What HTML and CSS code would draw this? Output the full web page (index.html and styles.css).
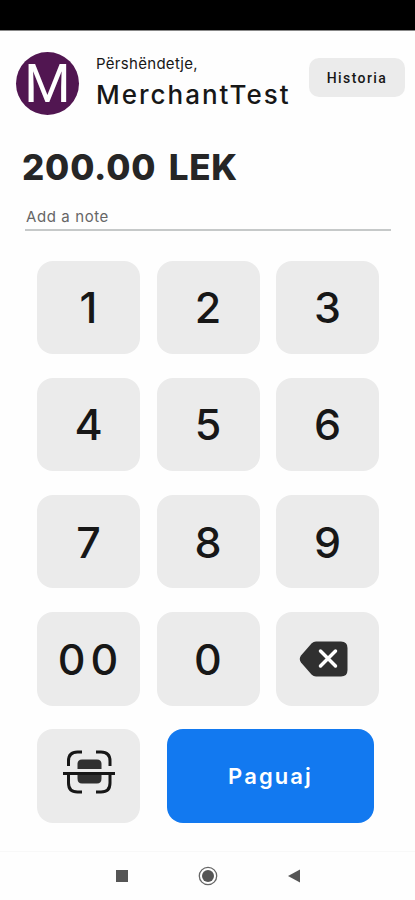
FILE: index.html
```html
<!DOCTYPE html>
<html lang="sq">

<head>
	<title>Merchant</title>
	<meta charset="UTF-8">
	<meta name="viewport" content="width=device-width, initial-scale=1.0">
	<link rel="stylesheet" href="styles.css">
</head>

<body>
	<div class="status-bar"></div>

	<header class="header">
		<div class="avatar">M</div>
		<div class="welcome">
			<div class="greeting">Përshëndetje,</div>
			<div class="merchant">MerchantTest</div>
		</div>
		<button class="history">Historia</button>
	</header>

	<main>
		<div class="amount">200.00 LEK</div>
		<input class="note" type="text" name="note" placeholder="Add a note">

		<div class="keypad">
			<button class="key">1</button>
			<button class="key">2</button>
			<button class="key">3</button>
			<button class="key">4</button>
			<button class="key">5</button>
			<button class="key">6</button>
			<button class="key">7</button>
			<button class="key">8</button>
			<button class="key">9</button>
			<button class="key double">00</button>
			<button class="key">0</button>
			<button class="key delete" aria-label="Delete">
				<svg width="50" height="38" viewBox="0 0 50 38">
					<path d="M17 1.5H42Q48.500 1.500 48.500 8V30Q48.500 36.500 42 36.500H17Q14.500 36.500 12.500 34.500L2 22.500Q-.5 19 2 15.500L12.500 3.500Q14.500 1.500 17 1.500Z" fill="#303030"/>
					<path d="M21.500 11.500L36.500 26.500M36.500 11.500L21.500 26.500" transform="translate(0 -.5)" stroke="#fff" stroke-width="3.500" stroke-linecap="round"/>
				</svg>
			</button>
		</div>

		<div class="actions">
			<button class="key scan" aria-label="Scan">
				<svg width="52" height="44" viewBox="0 0 52 44" fill="none" stroke="#171717" stroke-width="3">
					<path d="M5.500 16V11Q5.500 2 14.500 2H19M33 2H38Q47 2 47 11V16M5.500 24V33Q5.500 42 14.500 42H19M33 42H38Q47 42 47 33V24"/>
					<path d="M14.500 19V14Q14.500 9.500 19 9.500H34Q38.500 9.500 38.500 14V19ZM14.500 24H38.500V28.500Q38.500 33.500 34 33.500H19Q14.500 33.500 14.500 28.500Z" fill="#303030" stroke="none"/>
					<path d="M0 23.500H52"/>
				</svg>
			</button>
			<button class="pay">Paguaj</button>
		</div>
	</main>

	<nav class="nav-bar">
		<svg width="20" height="20" viewBox="0 0 20 20"><path d="M4 4H16V16H4Z" fill="#555"/></svg>
		<svg width="20" height="20" viewBox="0 0 20 20"><circle cx="10" cy="10" r="8.700" fill="none" stroke="#666" stroke-width="1.300"/><circle cx="10" cy="10" r="6" fill="#555"/></svg>
		<svg width="20" height="20" viewBox="0 0 20 20"><path d="M4 10L16 3.500V16.500Z" fill="#555"/></svg>
	</nav>
</body>

</html>
```
FILE: styles.css
```css
* {
	box-sizing: border-box;
}

body {
	margin: 0;
	height: 900px;
	display: flex;
	flex-direction: column;
	background-color: #fefefe;
	color: #171717;
	font-family: Inter, "Liberation Sans", sans-serif;
	overflow: hidden;
}

button {
	padding: 0;
	border: none;
	background-color: #ebebeb;
	color: inherit;
	font-family: inherit;
	cursor: pointer;
}

svg {
	display: block;
}

.status-bar {
	height: 31px;
	background-color: #000;
	border-bottom: 1px solid #888;
}

.header {
	display: flex;
	align-items: flex-start;
	height: 111px;
	padding: 21px 10px 0 16px;
}

.avatar {
	width: 63px;
	height: 63px;
	border-radius: 50%;
	background-color: #511651;
	color: #fff;
	font-family: Roboto, sans-serif;
	font-size: 53px;
	font-weight: 400;
	line-height: 65px;
	text-align: center;
}

.welcome {
	margin-left: 17px;
	white-space: nowrap;
}

.greeting {
	margin-top: 2px;
	font-size: 15px;
	line-height: 20px;
	letter-spacing: 0.3px;
}

.merchant {
	margin-top: 6px;
	font-size: 26px;
	font-weight: 500;
	line-height: 30px;
	letter-spacing: 2px;
}

.history {
	width: 96px;
	height: 39px;
	margin: 6px 0 0 auto;
	border-radius: 10px;
	font-family: Roboto, sans-serif;
	font-size: 14px;
	font-weight: 500;
	letter-spacing: 1.4px;
}

.amount {
	margin-left: 22px;
	color: #262626;
	font-size: 35px;
	font-weight: 800;
	line-height: 50px;
	letter-spacing: 0.8px;
	word-spacing: 4px;
	white-space: nowrap;
}

.note {
	display: block;
	width: 366px;
	height: 32px;
	margin: 7px 0 0 25px;
	padding: 4px 1px 0;
	border: none;
	border-bottom: 2px solid #c6c9c9;
	background: none;
	font-family: inherit;
	font-size: 15px;
	letter-spacing: 0.6px;
	outline: none;
}

.note::placeholder {
	color: #666;
	opacity: 1;
}

.keypad {
	display: grid;
	grid-template-columns: repeat(3, 103px);
	grid-auto-rows: 93.500px;
	gap: 23.700px 16.500px;
	margin: 29.500px 0 0 37px;
}

.key {
	display: flex;
	align-items: center;
	justify-content: center;
	width: 103px;
	height: 93.500px;
	border-radius: 16px;
	font-size: 43px;
	font-weight: 500;
}

.double {
	padding-left: 4px;
	letter-spacing: 5px;
}

.delete {
	padding-right: 8px;
}

.scan {
	padding-bottom: 8px;
}

.actions {
	display: flex;
	gap: 27px;
	margin: 23.700px 0 0 37px;
}

.pay {
	width: 207px;
	height: 94px;
	border-radius: 16px;
	background-color: #1279f0;
	color: #fff;
	font-size: 22px;
	font-weight: 600;
	letter-spacing: 2.1px;
}

.nav-bar {
	display: flex;
	align-items: center;
	justify-content: center;
	gap: 66px;
	height: 49px;
	margin-top: auto;
	border-top: 1px solid #f8f8f8;
}
```
